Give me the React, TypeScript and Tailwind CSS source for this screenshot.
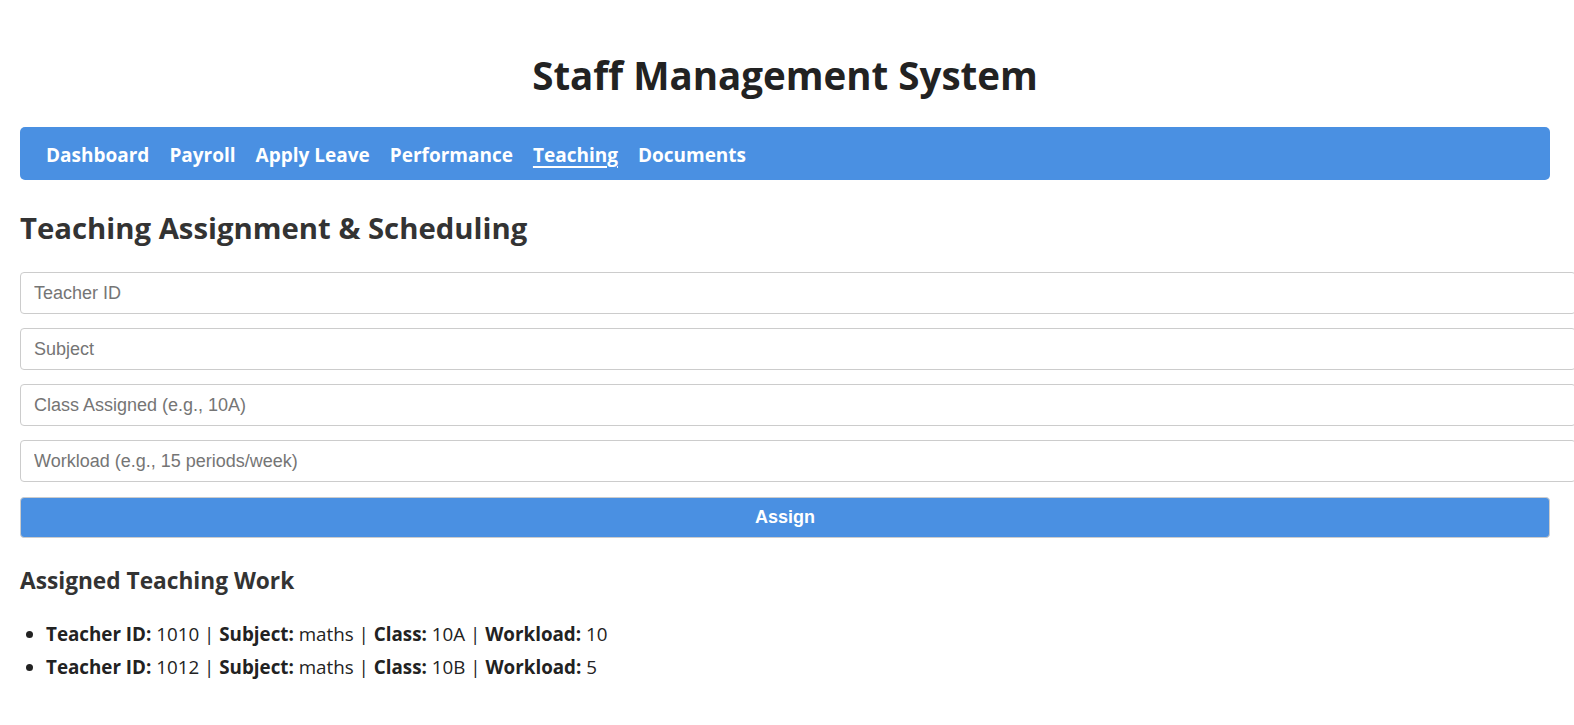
import React from 'react';

const links = ['Dashboard', 'Payroll', 'Apply Leave', 'Performance', 'Teaching', 'Documents'];

const fields = [
  'Teacher ID',
  'Subject',
  'Class Assigned (e.g., 10A)',
  'Workload (e.g., 15 periods/week)',
];

const work = [
  { id: '1010', subject: 'maths', cls: '10A', load: '10' },
  { id: '1012', subject: 'maths', cls: '10B', load: '5' },
];

export default function App() {
  return (
    <div className="min-h-[725px] overflow-hidden bg-white pl-5 pr-6 text-[#333] [font-family:'Open_Sans','Noto_Sans',sans-serif]">
      <h1 className="pt-[44px] pb-[21px] text-center text-[38.5px] font-bold leading-[62px] text-[#222]">
        Staff Management System
      </h1>

      <nav className="flex h-[53px] items-center gap-5 rounded-[5px] bg-[#4a90e2] px-[26px] pt-[3px]">
        {links.map(l => (
          <a key={l} href="#"
            className={`text-[19px] font-bold text-white ${l === 'Teaching' ? 'underline decoration-2 underline-offset-[4px]' : ''}`}>
            {l}
          </a>
        ))}
      </nav>

      <h2 className="mt-[28px] mb-[24px] text-[29.3px] font-bold leading-[40px] text-[#333]">
        Teaching Assignment &amp; Scheduling
      </h2>

      <form onSubmit={e => e.preventDefault()} className="flex flex-col gap-[14px]">
        {fields.map(f => (
          <input key={f} placeholder={f}
            className="h-[42px] w-[calc(100%+26px)] rounded-[4px] border border-[#ccc] px-[13px] text-[18px] text-[#333] placeholder:text-[#757575] [font-family:'Liberation_Sans',Arial,sans-serif] outline-none" />
        ))}
        <button type="submit"
          className="mt-px h-[41px] w-full rounded-[4px] border border-[#ccc] bg-[#4a90e2] text-[18px] font-bold text-white [font-family:'Liberation_Sans',Arial,sans-serif]">
          Assign
        </button>
      </form>

      <h3 className="mt-[28px] mb-[22px] text-[22.7px] font-bold leading-[30px] text-[#333]">
        Assigned Teaching Work
      </h3>

      <ul className="list-disc pl-[26px] text-[18.8px] leading-[33px] text-[#222]">
        {work.map(w => (
          <li key={w.id}>
            <b>Teacher ID:</b> {w.id} | <b>Subject:</b> {w.subject} | <b>Class:</b> {w.cls} | <b>Workload:</b> {w.load}
          </li>
        ))}
      </ul>
    </div>
  );
}
